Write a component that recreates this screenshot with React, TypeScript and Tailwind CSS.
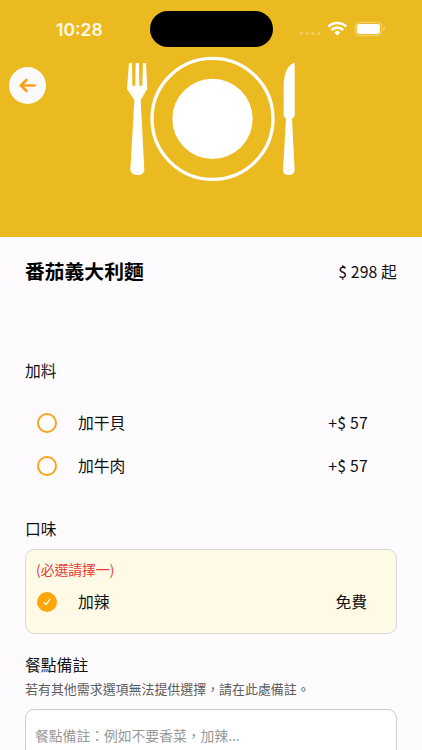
import { useState } from "react";

// ------------------------
// Types
// ------------------------
interface Option {
  id: number;
  name: string;
  price: string;
}

const extras: Option[] = [
  { id: 1, name: "加干貝", price: "+$ 57" },
  { id: 2, name: "加牛肉", price: "+$ 57" },
];

const flavors: Option[] = [{ id: 3, name: "加辣", price: "免費" }];

export default function App() {
  const [selected, setSelected] = useState<number[]>([3]);
  const [note, setNote] = useState("");

  function toggle(id: number) {
    setSelected((prev) =>
      prev.includes(id) ? prev.filter((i) => i !== id) : [...prev, id]
    );
  }

  return (
    <div className="h-[750px] w-[422px] overflow-hidden bg-[#fefbff] font-['Noto_Sans_CJK_TC',sans-serif] text-base text-[#111]">
      {/* Cover */}
      <header className="relative h-[237px] bg-[#ebba20] pt-[50px]">
        <StatusBar />
        <PlateArt />
        <button
          aria-label="返回"
          className="absolute left-[9px] top-[67px] flex size-[37px] items-center justify-center rounded-full bg-[#fafafa]"
        >
          <svg width="17" height="15" viewBox="0 0 17 15" fill="none" stroke="#f9a11b" strokeWidth="2.7" strokeLinecap="round" strokeLinejoin="round">
            <path d="M15.5 7.5H2M7.4 2 1.9 7.5 7.4 13" />
          </svg>
        </button>
      </header>

      <main className="px-[25px]">
        {/* Title */}
        <div className="flex h-[70px] items-center justify-between">
          <h1 className="-mt-0.5 text-[19.8px] font-bold text-black">番茄義大利麵</h1>
          <span className="text-[15.8px] tracking-[0.1px]">$ 298 起</span>
        </div>

        {/* Extras */}
        <h2 className="mt-[52px] text-[15.8px] leading-6">加料</h2>
        <div className="mt-[18px] pl-3 pr-[29px]">
          {extras.map((o) => (
            <OptionRow
              key={o.id}
              option={o}
              checked={selected.includes(o.id)}
              onToggle={() => toggle(o.id)}
            />
          ))}
        </div>

        {/* Flavor */}
        <h2 className="mt-[30px] text-[15.8px] leading-6">口味</h2>
        <section className="mt-2 h-[85px] rounded-[9px] border border-[#d9d8d6] bg-[#fffae6] pl-[11px] pr-[29px] pt-[9px]">
          <p className="-ml-px h-[21px] text-[13.8px] leading-[21px] text-[#e83a36]">(必選請擇一)</p>
          {flavors.map((o) => (
            <OptionRow
              key={o.id}
              option={o}
              checked={selected.includes(o.id)}
              onToggle={() => toggle(o.id)}
            />
          ))}
        </section>

        {/* Note */}
        <h2 className="mt-[19px] text-[15.8px] leading-6">餐點備註</h2>
        <p className="mt-[2px] text-[12.95px] leading-5 text-[#5c5c5c]">
          若有其他需求選項無法提供選擇，請在此處備註。
        </p>
        <textarea
          value={note}
          onChange={(e) => setNote(e.target.value)}
          placeholder="餐點備註：例如不要香菜，加辣..."
          className="mt-[10px] block h-[100px] w-full resize-none rounded-[9px] border border-[#cfcdd0] bg-white px-[9px] py-[15px] text-[13.8px] leading-[21px] placeholder:text-[#979797]"
        />
      </main>
    </div>
  );
}

// ---------------------------
// Option Row
// ---------------------------
interface OptionRowProps {
  option: Option;
  checked: boolean;
  onToggle: () => void;
}

function OptionRow({ option, checked, onToggle }: OptionRowProps) {
  return (
    <button onClick={onToggle} className="flex h-[43px] w-full items-center text-left text-[15.8px]">
      {checked ? (
        <span className="flex size-5 items-center justify-center rounded-full bg-[#ffa60a]">
          <svg width="8" height="8" viewBox="0 0 8 8" fill="none" stroke="#fff6dc" strokeWidth="1.4" strokeLinecap="round" strokeLinejoin="round">
            <path d="M1 4.6 2.9 6.6 7 1.4" />
          </svg>
        </span>
      ) : (
        <span className="size-5 rounded-full border-2 border-[#faa31b]" />
      )}
      <span className="ml-[21px] flex-1">{option.name}</span>
      <span className={option.price.startsWith("+") ? "tracking-[0.25px]" : ""}>
        {option.price}
      </span>
    </button>
  );
}

// ---------------------------
// Status Bar
// ---------------------------
function StatusBar() {
  return (
    <div className="absolute inset-x-0 top-[11px] flex h-9 items-center text-white">
      <span className="w-[149.5px] pl-14 pt-px font-['Inter',sans-serif] text-[17.5px] font-semibold leading-none text-[#fffbe8]">
        10:28
      </span>
      <div className="h-[36px] w-[123px] rounded-full bg-black" />
      <svg className="ml-[26.5px]" width="88" height="18" viewBox="0 0 88 18" fill="none">
        <g fill="#f1cc55">
          <circle cx="2.5" cy="13.5" r="1.7" />
          <circle cx="8.2" cy="13.5" r="1.7" />
          <circle cx="14" cy="13.5" r="1.7" />
          <circle cx="19.8" cy="13.5" r="1.7" />
        </g>
        <g stroke="#fff" strokeWidth="2.6">
          <path d="M29.3 6.7a12.8 12.8 0 0 1 18 0" />
          <path d="M32.4 10a8.4 8.4 0 0 1 11.8 0" />
        </g>
        <path d="M38.3 15.4 35.3 12.4a4.3 4.3 0 0 1 6 0Z" fill="#fff" />
        <rect x="56.1" y="2.4" width="26.6" height="13.2" rx="4" stroke="#f4d67c" />
        <rect x="57.8" y="4.1" width="23.2" height="9.8" rx="2.6" fill="#fff" />
        <path d="M84.3 6.8q1.6.5 1.6 2.2t-1.6 2.2Z" fill="#f4d67c" />
      </svg>
    </div>
  );
}

// ---------------------------
// Fork, plate and knife
// ---------------------------
function PlateArt() {
  return (
    <svg className="ml-[110px]" width="200" height="140" viewBox="0 0 600 420" fill="#fff">
      <path d="M57 39h9l1 68h9l1-68h10l1 68h9l2-68h9l4 77-20 34 11 210q-1 15-20 15t-22-15l12-210-22-34Z" />
      <circle cx="307.500" cy="206.500" r="181.500" fill="none" stroke="#fff" strokeWidth="10" />
      <circle cx="307.500" cy="206.500" r="120.500" />
      <path d="M554 38v161l-8 7 8 154q-1 15-18 15t-17-15l9-154-7-7V105q2-58 33-67Z" />
    </svg>
  );
}
